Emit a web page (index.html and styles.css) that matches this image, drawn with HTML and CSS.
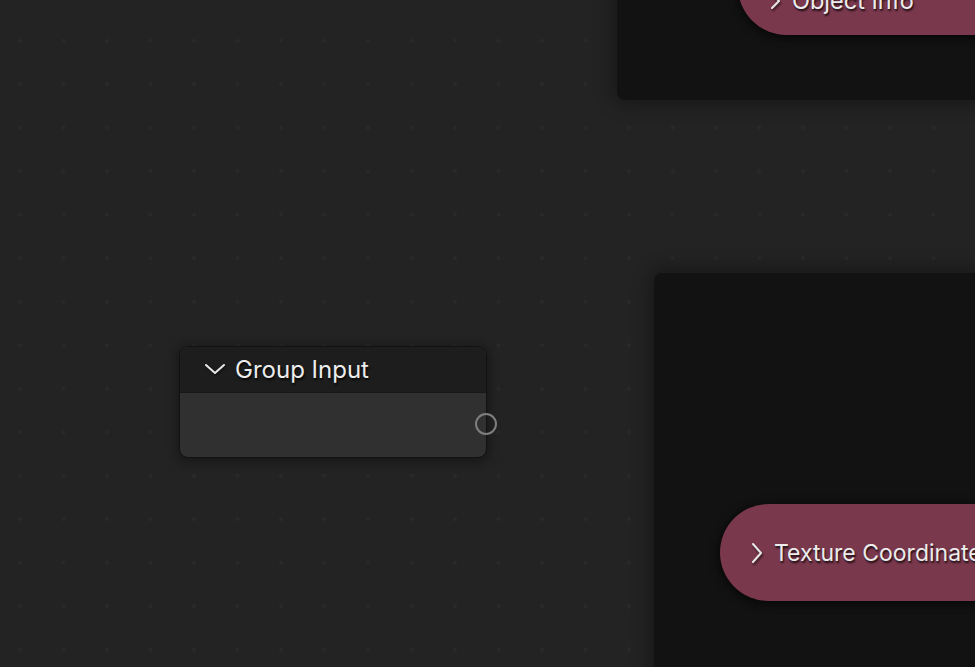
FILE: index.html
```html
<!DOCTYPE html>
<html>
<head>
<meta charset="utf-8">
<link rel="stylesheet" href="styles.css">
</head>
<body>
<div class="canvas">
  <div class="frame frame-top">
    <div class="pill pill-top">
      <svg class="chev-right" width="12" height="18" viewBox="0 0 12 18"><path d="M2 2 L9 9 L2 16" fill="none" stroke="#e8e8e8" stroke-width="2" stroke-linecap="round" stroke-linejoin="round"/></svg>
      <span class="pill-label">Object Info</span>
    </div>
  </div>

  <div class="frame frame-bottom">
    <div class="pill pill-bottom">
      <svg class="chev-right" width="12" height="22" viewBox="0 0 12 22"><path d="M2 2 L10 11 L2 20" fill="none" stroke="#e8e8e8" stroke-width="2" stroke-linecap="round" stroke-linejoin="round"/></svg>
      <span class="pill-label">Texture Coordinate</span>
    </div>
  </div>

  <div class="node group-input">
    <div class="node-header">
      <svg class="chev-down" width="22" height="14" viewBox="0 0 22 14"><path d="M2 3 L11 11 L20 3" fill="none" stroke="#e8e8e8" stroke-width="2" stroke-linecap="round" stroke-linejoin="round"/></svg>
      <span class="node-title">Group Input</span>
    </div>
    <div class="node-body"></div>
    <div class="socket"></div>
  </div>
</div>
</body>
</html>
```

FILE: styles.css
```css
html, body {
  margin: 0;
  padding: 0;
  width: 975px;
  height: 667px;
  overflow: hidden;
}
body {
  background-color: #232323;
  font-family: Inter, "Noto Sans", "DejaVu Sans", sans-serif;
}
.canvas {
  position: relative;
  width: 975px;
  height: 667px;
  overflow: hidden;
  background-color: #232323;
  background-image: radial-gradient(circle, #292929 0, #292929 1.6px, transparent 2.2px);
  background-size: 43.5px 43.5px;
  background-position: -1.75px 18.95px;
}
.frame {
  position: absolute;
  background: #121212;
  border-radius: 8px;
  box-shadow: 0 0 18px 5px rgba(0,0,0,0.3);
  overflow: hidden;
}
.frame-top {
  left: 617px;
  top: -40px;
  width: 400px;
  height: 140px;
}
.frame-bottom {
  left: 654px;
  top: 273px;
  width: 360px;
  height: 420px;
}
.pill {
  position: absolute;
  background: #7a384d;
  border-radius: 49px;
  height: 97px;
  display: flex;
  align-items: center;
  box-shadow: 0 2px 8px 2px rgba(0,0,0,0.55);
  color: #ececec;
}
.pill-top {
  left: 121px;
  top: -22px;
  width: 400px;
}
.pill-bottom {
  left: 66px;
  top: 231px;
  width: 400px;
}
.pill-top .chev-right {
  margin-left: 32px;
  margin-top: 28px;
}
.pill-top .pill-label {
  margin-left: 10px;
  margin-top: 27px;
  font-size: 23.5px;
}
.pill-bottom .chev-right {
  margin-left: 31px;
}
.pill-bottom .pill-label {
  margin-left: 11px;
  font-size: 23px;
}
.pill-label {
  white-space: nowrap;
  text-shadow: 1px 2px 2px rgba(0,0,0,0.8);
}
.chev-right {
  flex: none;
  filter: drop-shadow(1px 2px 1px rgba(0,0,0,0.6));
}
.node {
  position: absolute;
  left: 179px;
  top: 346px;
  width: 306px;
  height: 110px;
  border: 1px solid #121212;
  border-radius: 9px;
  background: #303030;
  box-shadow: 0 2px 10px 3px rgba(0,0,0,0.3);
  display: flex;
  flex-direction: column;
}
.node-header {
  height: 45px;
  background: #1d1d1d;
  border-radius: 8px 8px 0 0;
  border-bottom: 1px solid #181818;
  display: flex;
  align-items: center;
  color: #ececec;
}
.chev-down {
  margin-left: 24px;
  margin-top: -2px;
  flex: none;
  filter: drop-shadow(1px 1px 1px rgba(0,0,0,0.6));
}
.node-title {
  margin-left: 9px;
  font-size: 24px;
  text-shadow: 1px 2px 2px rgba(0,0,0,0.8);
}
.node-body {
  flex: 1;
  border-radius: 0 0 8px 8px;
}
.socket {
  position: absolute;
  left: 295px;
  top: 66px;
  border: 2px solid #7e7e7e;
  border-radius: 50%;
  box-sizing: border-box;
  width: 22px;
  height: 22px;
}
```
